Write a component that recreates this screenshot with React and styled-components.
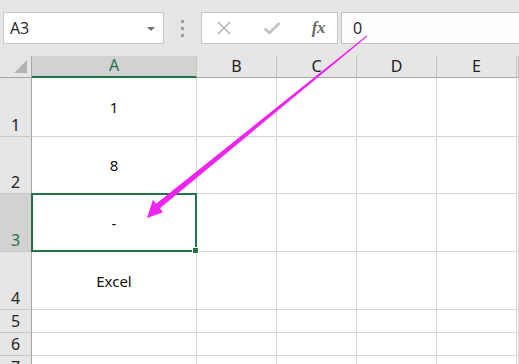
import React from "react";
import styled, { createGlobalStyle } from "styled-components";

const Global = createGlobalStyle`
  html, body { margin: 0; padding: 0; background: #e6e6e6; overflow: hidden; }
  body { font-family: "Liberation Sans", Arial, sans-serif; }
`;

const Page = styled.div`
  position: relative;
  width: 519px;
  height: 364px;
  overflow: hidden;
  background: #e6e6e6;
`;

const FormulaBar = styled.div`
  display: flex;
  align-items: flex-start;
  height: 56px;
  box-sizing: border-box;
  padding: 12px 0 0 3px;
`;

const Box = styled.div`
  box-sizing: border-box;
  height: 32px;
  border: 1px solid #c6c6c6;
  background: ${(p) => p.$bg || "#fff"};
  display: flex;
  align-items: center;
`;

const NameBox = styled(Box)`
  width: 161px;
  padding: 0 8px 0 6px;
  justify-content: space-between;
  font-family: "Open Sans", "Liberation Sans", sans-serif;
  font-size: 16px;
  color: #222;
`;

const Caret = styled.span`
  width: 0;
  height: 0;
  border-left: 4px solid transparent;
  border-right: 4px solid transparent;
  border-top: 4px solid #6f6f6f;
  margin-top: 2px;
`;

const Grip = styled.div`
  width: 37px;
  height: 32px;
  display: flex;
  flex-direction: column;
  align-items: center;
  justify-content: center;
  gap: 4px;
  span {
    width: 3px;
    height: 3px;
    background: #a0a0a0;
  }
`;

const FuncBox = styled(Box)`
  width: 137px;
  padding: 0 12px 0 14px;
  justify-content: space-between;
`;

const Fx = styled.span`
  font-family: "Liberation Serif", "Times New Roman", serif;
  font-style: italic;
  font-weight: bold;
  font-size: 17px;
  color: #6a6a6a;
  letter-spacing: -0.5px;
`;

const FormulaInput = styled(Box)`
  flex: 1;
  margin-left: 3px;
  margin-right: -2px;
  padding-left: 11px;
  font-family: "Open Sans", "Liberation Sans", sans-serif;
  font-size: 16px;
  color: #222;
`;

const Sheet = styled.div`
  display: grid;
  grid-template-columns: 32px 165px 80px 80px 80px 80px 1fr;
  grid-template-rows: 22px 59px 57px 58px 58px 23px 23px 23px;
  background: #fff;
  font-family: "Noto Sans", "Liberation Sans", sans-serif;
`;

const Corner = styled.div`
  position: relative;
  background: #e6e6e6;
  border-right: 1px solid #a6a6a6;
  border-bottom: 1px solid #a6a6a6;
  &::after {
    content: "";
    position: absolute;
    right: 4px;
    bottom: 4px;
    width: 0;
    height: 0;
    border-left: 13px solid transparent;
    border-bottom: 13px solid #b4b4b4;
  }
`;

const ColHead = styled.div`
  display: flex;
  align-items: flex-end;
  justify-content: center;
  padding-bottom: 1px;
  box-sizing: border-box;
  background: ${(p) => (p.$active ? "#d2d2d2" : "#e6e6e6")};
  color: ${(p) => (p.$active ? "#217346" : "#222")};
  border-right: 1px solid #c4c4c4;
  border-bottom: ${(p) => (p.$active ? "2px solid #217346" : "1px solid #a6a6a6")};
  font-size: 16px;
  line-height: 20px;
`;

const RowHead = styled.div`
  display: flex;
  align-items: flex-end;
  justify-content: center;
  box-sizing: border-box;
  padding-bottom: 1px;
  background: ${(p) => (p.$active ? "#d2d2d2" : "#e6e6e6")};
  color: ${(p) => (p.$active ? "#217346" : "#222")};
  border-right: 1px solid #a6a6a6;
  border-bottom: 1px solid #c8c8c8;
  font-size: 16px;
  line-height: 20px;
`;

const Cell = styled.div`
  position: relative;
  display: flex;
  align-items: center;
  justify-content: center;
  box-sizing: border-box;
  border-right: 1px solid #d4d4d4;
  border-bottom: 1px solid #d4d4d4;
  font-size: 15px;
  color: #111;
  ${(p) =>
    p.$selected &&
    `
    &::after {
      content: "";
      position: absolute;
      left: -1px;
      top: -1px;
      right: -1px;
      bottom: -1px;
      border: 2px solid #217346;
    }
    &::before {
      content: "";
      position: absolute;
      right: -3px;
      bottom: -3px;
      width: 5px;
      height: 5px;
      background: #217346;
      border: 1px solid #fff;
      z-index: 2;
    }
  `}
`;

const ArrowLayer = styled.svg`
  position: absolute;
  left: 0;
  top: 0;
  width: 519px;
  height: 364px;
  pointer-events: none;
`;

const columns = ["A", "B", "C", "D", "E", ""];
const rows = [
  { n: 1, a: "1" },
  { n: 2, a: "8" },
  { n: 3, a: "-", selected: true },
  { n: 4, a: "Excel" },
  { n: 5, a: "" },
  { n: 6, a: "" },
  { n: 7, a: "" },
];

const Cross = () => (
  <svg width="16" height="16" viewBox="0 0 16 16">
    <path d="M2 2 L14 14 M14 2 L2 14" stroke="#b8b8b8" strokeWidth="1.6" fill="none" />
  </svg>
);

const Check = () => (
  <svg width="18" height="16" viewBox="0 0 18 16">
    <path d="M1.5 8.5 L6.5 13 L16.5 3" stroke="#c2c2c2" strokeWidth="2.6" fill="none" />
  </svg>
);

export default function App() {
  return (
    <Page>
      <Global />
      <FormulaBar>
        <NameBox>
          A3
          <Caret />
        </NameBox>
        <Grip>
          <span />
          <span />
          <span />
        </Grip>
        <FuncBox>
          <Cross />
          <Check />
          <Fx>fx</Fx>
        </FuncBox>
        <FormulaInput $bg="#fdfdfd">0</FormulaInput>
      </FormulaBar>
      <Sheet>
        <Corner />
        {columns.map((c, i) => (
          <ColHead key={i} $active={c === "A"}>
            {c}
          </ColHead>
        ))}
        {rows.map((r) => (
          <React.Fragment key={r.n}>
            <RowHead $active={r.selected}>{r.n}</RowHead>
            <Cell $selected={r.selected}>{r.a}</Cell>
            {columns.slice(1).map((c, i) => (
              <Cell key={i} />
            ))}
          </React.Fragment>
        ))}
      </Sheet>
      <ArrowLayer viewBox="0 0 519 364">
        <polygon
          points="367.3,36.4 366.7,35.6 156.1,203.7 153,199.8 147,218 163,212.2 159.9,208.3"
          fill="#ef22ef"
        />
      </ArrowLayer>
    </Page>
  );
}
